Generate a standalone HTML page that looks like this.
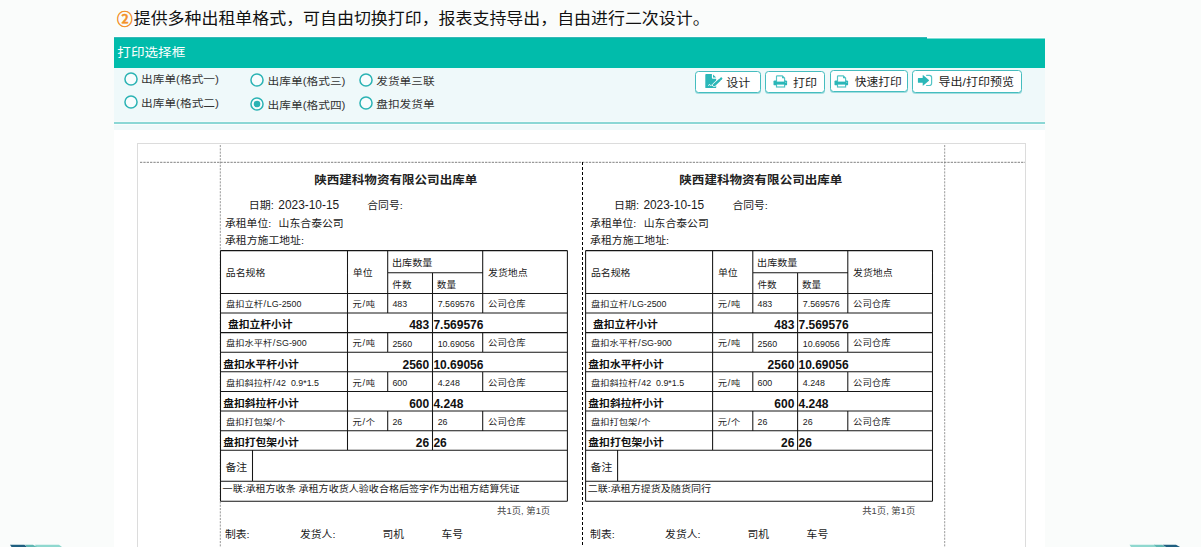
<!DOCTYPE html><html lang="zh-CN"><head><meta charset="utf-8"><title>打印选择框</title><style>
html,body{margin:0;padding:0;}
body{width:1201px;height:547px;overflow:hidden;background:#fafcfb;position:relative;font-family:"Liberation Sans","Noto Sans CJK SC",sans-serif;color:#1a1a1a;}
.t{position:absolute;white-space:nowrap;line-height:20px;}
.abs{position:absolute;}
h1,section,main,article,header,footer,nav{display:block;margin:0;padding:0;font:inherit;}
.t i{font-style:normal;font-size:8.9px;}
.t u{text-decoration:none;padding:0 .7px;}
.q{transform:scaleY(0.92);}
.c2{-webkit-text-stroke:0.55px #f3922b;}
.btn{position:absolute;box-sizing:border-box;background:#fff;border:1.2px solid #45bdbf;border-radius:3.5px;box-shadow:0 1px 0 rgba(69,189,191,.45);}
</style></head><body>
<main>
<div class="abs" style="left:114px;top:130px;width:931px;height:417px;background:#fff;"></div>
<section class="panel">
<svg class="abs" style="left:0;top:30px" width="1201" height="100" viewBox="0 30 1201 100">
<rect x="114" y="36" width="813" height="2" fill="#fff"/><rect x="927" y="37" width="118" height="2" fill="#fff"/>
<rect x="114" y="37.3" width="813" height="30.7" fill="#01bcab"/><rect x="927" y="38.5" width="118" height="29.5" fill="#01bcab"/>
<rect x="114" y="37.5" width="813" height="0.9" fill="#16a8aa"/>
<rect x="114" y="68" width="931" height="62" fill="#eff9fa"/>
<rect x="114" y="121" width="931" height="4" fill="#fff"/>
<rect x="114" y="121.9" width="931" height="2.15" fill="#8bd7d5"/>
</svg>
<h1>
<span class="t c2" style="top:10.07px;font-size:15.6px;left:117.00px;font-weight:500;color:#f3922b;">②</span>
<span class="t q" style="top:9.17px;font-size:16.95px;left:133.70px;color:#111;">提供多种出租单格式，可自由切换打印，报表支持导出，自由进行二次设计。</span>
</h1>
<span class="t q" style="top:43.17px;font-size:13.6px;left:117.30px;color:#fff;">打印选择框</span>
<nav class="formats">
<svg class="abs" style="left:122.55px;top:70.50px" width="16" height="16" viewBox="0 0 16 16"><circle cx="8" cy="8" r="6.05" fill="#f8fcfd" stroke="#2bb3b4" stroke-width="1.5"/></svg>
<span class="t q" style="top:69.28px;font-size:11.7px;left:141.00px;color:#333;">出库单(格式一)</span>
<svg class="abs" style="left:122.55px;top:94.20px" width="16" height="16" viewBox="0 0 16 16"><circle cx="8" cy="8" r="6.05" fill="#f8fcfd" stroke="#2bb3b4" stroke-width="1.5"/></svg>
<span class="t q" style="top:93.28px;font-size:11.7px;left:141.00px;color:#333;">出库单(格式二)</span>
<svg class="abs" style="left:248.90px;top:72.20px" width="16" height="16" viewBox="0 0 16 16"><circle cx="8" cy="8" r="6.05" fill="#f8fcfd" stroke="#2bb3b4" stroke-width="1.5"/></svg>
<span class="t q" style="top:70.88px;font-size:11.7px;left:267.60px;color:#333;">出库单(格式三)</span>
<svg class="abs" style="left:248.90px;top:95.60px" width="16" height="16" viewBox="0 0 16 16"><circle cx="8" cy="8" r="6.05" fill="#f8fcfd" stroke="#2bb3b4" stroke-width="1.5"/><circle cx="8" cy="8" r="3.3" fill="#2bb3b4"/></svg>
<span class="t q" style="top:94.78px;font-size:11.7px;left:267.60px;color:#333;">出库单(格式四)</span>
<svg class="abs" style="left:358.10px;top:72.20px" width="16" height="16" viewBox="0 0 16 16"><circle cx="8" cy="8" r="6.05" fill="#f8fcfd" stroke="#2bb3b4" stroke-width="1.5"/></svg>
<span class="t q" style="top:71.43px;font-size:11.7px;left:376.20px;color:#333;">发货单三联</span>
<svg class="abs" style="left:358.10px;top:95.30px" width="16" height="16" viewBox="0 0 16 16"><circle cx="8" cy="8" r="6.05" fill="#f8fcfd" stroke="#2bb3b4" stroke-width="1.5"/></svg>
<span class="t q" style="top:94.43px;font-size:11.7px;left:376.20px;color:#333;">盘扣发货单</span>
</nav><nav class="toolbar">
<div class="btn" style="left:695.3px;top:70.9px;width:65.6px;height:22.1px;"></div>
<div class="btn" style="left:765.4px;top:70.9px;width:60.0px;height:22.1px;"></div>
<div class="btn" style="left:829.9px;top:70.1px;width:77.9px;height:22.4px;"></div>
<div class="btn" style="left:912.2px;top:70.0px;width:109.8px;height:22.5px;"></div>
<span class="t q" style="top:73.20px;font-size:12px;left:726.30px;color:#222;">设计</span>
<span class="t q" style="top:73.20px;font-size:12px;left:793.10px;color:#222;">打印</span>
<span class="t q" style="top:72.48px;font-size:11.75px;left:854.70px;color:#222;">快速打印</span>
<span class="t q" style="top:72.10px;font-size:12px;left:938.60px;color:#222;">导出/打印预览</span>
<svg class="abs" style="left:705px;top:74px;overflow:visible" width="18" height="15" viewBox="0 0 18 15">
<path d="M0.3 0.9 Q0.3 0.1 1.1 0.1 L6.9 0.1 L6.9 3.7 Q6.9 4.7 7.9 4.7 L11.2 4.7 L11.2 13.4 Q11.2 14.1 10.4 14.1 L1.1 14.1 Q0.3 14.1 0.3 13.4 Z" fill="#2bb7b8"/>
<path d="M8 0.4 L11.2 3.6 L8 3.6 Z" fill="#2bb7b8"/>
<path d="M3.4 11.9 L4.5 10.2 L5.4 11.6 L6.3 11.2 L8.2 11.7" fill="none" stroke="#fff" stroke-width="0.8" stroke-linejoin="round"/>
<path d="M16 4.7 L9.2 11.0" fill="none" stroke="#fff" stroke-width="3.9" stroke-linecap="round"/>
<path d="M14.5 6.1 L9.2 11.0" fill="none" stroke="#2bb7b8" stroke-width="2.6" stroke-linecap="round"/>
<path d="M15.9 4.8 L16.2 4.5" fill="none" stroke="#2bb7b8" stroke-width="2.4" stroke-linecap="round"/>
</svg>
<svg class="abs" style="left:773px;top:75px;overflow:visible" width="15" height="13" viewBox="0 0 15 13">
<path d="M1.7 5.4 L12.9 5.4 Q14.1 5.4 14.1 6.6 L14.1 9.6 Q14.1 10.2 13.5 10.2 L1.1 10.2 Q0.5 10.2 0.5 9.6 L0.5 6.6 Q0.5 5.4 1.7 5.4 Z" fill="#2bb7b8"/>
<path d="M3.5 7.1 L3.5 1.4 Q3.5 0.8 4.1 0.8 L9.3 0.8 L11.6 3.1 L11.6 7.1 Z" fill="#fff" stroke="#2bb7b8" stroke-width="1.15" stroke-opacity=".8"/>
<path d="M9.1 1.0 L11.4 3.3 L9.1 3.3 Z" fill="#2bb7b8"/>
<rect x="3.5" y="9.1" width="8.1" height="2.9" fill="#fff" stroke="#2bb7b8" stroke-width="1.15" stroke-opacity=".85"/>
<circle cx="12.7" cy="7.3" r="0.55" fill="#fff" fill-opacity=".6"/>
</svg>
<svg class="abs" style="left:834.2px;top:74.6px;overflow:visible" width="15" height="13" viewBox="0 0 15 13">
<path d="M1.7 5.4 L12.9 5.4 Q14.1 5.4 14.1 6.6 L14.1 9.6 Q14.1 10.2 13.5 10.2 L1.1 10.2 Q0.5 10.2 0.5 9.6 L0.5 6.6 Q0.5 5.4 1.7 5.4 Z" fill="#2bb7b8"/>
<path d="M3.5 7.1 L3.5 1.4 Q3.5 0.8 4.1 0.8 L9.3 0.8 L11.6 3.1 L11.6 7.1 Z" fill="#fff" stroke="#2bb7b8" stroke-width="1.15" stroke-opacity=".8"/>
<path d="M9.1 1.0 L11.4 3.3 L9.1 3.3 Z" fill="#2bb7b8"/>
<rect x="3.5" y="9.1" width="8.1" height="2.9" fill="#fff" stroke="#2bb7b8" stroke-width="1.15" stroke-opacity=".85"/>
<circle cx="12.7" cy="7.3" r="0.55" fill="#fff" fill-opacity=".6"/>
</svg>
<svg class="abs" style="left:917px;top:74px;overflow:visible" width="16" height="13" viewBox="0 0 16 13">
<path d="M1.4 4.1 L5.7 4.1 L5.7 1.4 Q5.7 0.7 6.3 1.2 L11.9 6 Q12.2 6.4 11.9 6.8 L6.3 11.6 Q5.7 12.1 5.7 11.4 L5.7 8.7 L1.4 8.7 Q0.9 8.7 0.9 8.2 L0.9 4.6 Q0.9 4.1 1.4 4.1 Z" fill="#2bb7b8"/>
<path d="M9.6 1.3 L12.4 1.3 Q14.6 1.3 14.6 3.5 L14.6 9.3 Q14.6 11.5 12.4 11.5 L9.6 11.5" fill="none" stroke="#2bb7b8" stroke-width="1.2" stroke-linecap="round" stroke-opacity=".8"/>
</svg>
</nav></section><section class="preview">
<div class="abs" style="left:137px;top:142.5px;width:889px;height:420px;box-sizing:border-box;border:1px solid #dcdcdc;background:#fff;"></div>
<svg class="abs" style="left:0;top:0" width="1201" height="547" viewBox="0 0 1201 547">
<path d="M220.3 145 V547 M944.7 145 V547" fill="none" stroke="#999" stroke-width="1" stroke-dasharray="2.1 1.2"/>
<path d="M140 162.3 H1025" fill="none" stroke="#808080" stroke-width="1" stroke-dasharray="2.3 1.05"/>
<path d="M582.5 162 V547" fill="none" stroke="#000" stroke-width="1" stroke-dasharray="3 2"/>
</svg>
<article class="doc">
<svg class="abs" style="left:0;top:0" width="1201" height="547" viewBox="0 0 1201 547"><path d="M220.50 250.60 H567.40 M387.70 272.80 H482.70 M220.50 293.40 H567.40 M220.50 313.01 H567.40 M220.50 332.62 H567.40 M220.50 352.23 H567.40 M220.50 371.84 H567.40 M220.50 391.45 H567.40 M220.50 411.06 H567.40 M220.50 430.67 H567.40 M220.50 450.28 H567.40 M220.50 481.20 H567.40 M220.50 501.30 H567.40 M220.50 250.60 V501.30 M567.40 250.60 V501.30 M347.50 250.60 V450.28 M387.70 250.60 V293.40 M482.70 250.60 V293.40 M432.50 272.80 V293.40 M387.70 293.40 V313.01 M432.50 293.40 V332.62 M482.70 293.40 V313.01 M387.70 332.62 V352.23 M432.50 332.62 V371.84 M482.70 332.62 V352.23 M387.70 371.84 V391.45 M432.50 371.84 V411.06 M482.70 371.84 V391.45 M387.70 411.06 V430.67 M432.50 411.06 V450.28 M482.70 411.06 V430.67 M252.50 450.28 V481.20" fill="none" stroke="#161616" stroke-width="1.05"/></svg>
<span class="t q" style="top:170.24px;font-size:12.55px;left:314.20px;font-weight:bold;color:#222;">陕西建科物资有限公司出库单</span>
<span class="t q" style="top:195.02px;font-size:11px;left:248.80px;">日期:</span>
<span class="t " style="top:195.29px;font-size:11.9px;left:278.30px;">2023-10-15</span>
<span class="t q" style="top:195.01px;font-size:10.8px;left:367.30px;">合同号:</span>
<span class="t q" style="top:212.51px;font-size:10.8px;left:225.00px;">承租单位:</span>
<span class="t q" style="top:212.51px;font-size:10.85px;left:278.60px;">山东合泰公司</span>
<span class="t q" style="top:230.21px;font-size:10.85px;left:225.00px;">承租方施工地址:</span>
<span class="t q" style="top:262.54px;font-size:9.9px;left:225.80px;">品名规格</span>
<span class="t q" style="top:262.54px;font-size:9.9px;left:352.80px;">单位</span>
<span class="t q" style="top:252.56px;font-size:10.1px;left:392.00px;">出库数量</span>
<span class="t q" style="top:275.02px;font-size:9.6px;left:392.30px;">件数</span>
<span class="t q" style="top:275.02px;font-size:9.6px;left:436.80px;">数量</span>
<span class="t q" style="top:263.44px;font-size:9.9px;left:488.00px;">发货地点</span>
<span class="t q" style="top:294.20px;font-size:9.25px;left:225.90px;">盘扣立杆<u>/</u><i>LG-2500</i></span>
<span class="t q" style="top:294.20px;font-size:9.25px;left:352.60px;">元<u>/</u>吨</span>
<span class="t " style="top:294.37px;font-size:8.85px;left:392.40px;">483</span>
<span class="t " style="top:294.37px;font-size:8.85px;left:437.70px;">7.569576</span>
<span class="t q" style="top:294.21px;font-size:9.4px;left:488.00px;">公司仓库</span>
<span class="t q" style="top:314.32px;font-size:10.8px;left:227.90px;font-weight:bold;color:#111;">盘扣立杆小计</span>
<span class="t " style="top:315.31px;font-size:12px;right:771.80px;font-weight:bold;color:#111;">483</span>
<span class="t " style="top:315.31px;font-size:12px;left:433.40px;font-weight:bold;color:#111;">7.569576</span>
<span class="t q" style="top:333.42px;font-size:9.25px;left:225.90px;">盘扣水平杆<u>/</u><i>SG-900</i></span>
<span class="t q" style="top:333.42px;font-size:9.25px;left:352.60px;">元<u>/</u>吨</span>
<span class="t " style="top:333.59px;font-size:8.85px;left:392.40px;">2560</span>
<span class="t " style="top:333.59px;font-size:8.85px;left:437.70px;">10.69056</span>
<span class="t q" style="top:333.43px;font-size:9.4px;left:488.00px;">公司仓库</span>
<span class="t q" style="top:353.54px;font-size:10.8px;left:223.20px;font-weight:bold;color:#111;">盘扣水平杆小计</span>
<span class="t " style="top:354.53px;font-size:12px;right:771.80px;font-weight:bold;color:#111;">2560</span>
<span class="t " style="top:354.53px;font-size:12px;left:433.40px;font-weight:bold;color:#111;">10.69056</span>
<span class="t q" style="top:372.64px;font-size:9.25px;left:225.90px;">盘扣斜拉杆<u>/</u><i>42&nbsp; 0.9*1.5</i></span>
<span class="t q" style="top:372.64px;font-size:9.25px;left:352.60px;">元<u>/</u>吨</span>
<span class="t " style="top:372.81px;font-size:8.85px;left:392.40px;">600</span>
<span class="t " style="top:372.81px;font-size:8.85px;left:437.70px;">4.248</span>
<span class="t q" style="top:372.65px;font-size:9.4px;left:488.00px;">公司仓库</span>
<span class="t q" style="top:392.76px;font-size:10.8px;left:223.20px;font-weight:bold;color:#111;">盘扣斜拉杆小计</span>
<span class="t " style="top:393.75px;font-size:12px;right:771.80px;font-weight:bold;color:#111;">600</span>
<span class="t " style="top:393.75px;font-size:12px;left:433.40px;font-weight:bold;color:#111;">4.248</span>
<span class="t q" style="top:411.86px;font-size:9.25px;left:225.90px;">盘扣打包架<u>/</u>个</span>
<span class="t q" style="top:411.86px;font-size:9.25px;left:352.60px;">元<u>/</u>个</span>
<span class="t " style="top:412.03px;font-size:8.85px;left:392.40px;">26</span>
<span class="t " style="top:412.03px;font-size:8.85px;left:437.70px;">26</span>
<span class="t q" style="top:411.87px;font-size:9.4px;left:488.00px;">公司仓库</span>
<span class="t q" style="top:431.98px;font-size:10.8px;left:223.20px;font-weight:bold;color:#111;">盘扣打包架小计</span>
<span class="t " style="top:432.97px;font-size:12px;right:771.80px;font-weight:bold;color:#111;">26</span>
<span class="t " style="top:432.97px;font-size:12px;left:433.40px;font-weight:bold;color:#111;">26</span>
<span class="t q" style="top:456.52px;font-size:10.9px;left:225.40px;">备注</span>
<span class="t q" style="top:479.35px;font-size:10.05px;left:222.60px;">一联:承租方收条 承租方收货人验收合格后签字作为出租方结算凭证</span>
<span class="t q" style="top:501.20px;font-size:9.4px;left:497.10px;color:#444;">共1页, 第1页</span>
<span class="t q" style="top:523.91px;font-size:10.8px;left:225.00px;">制表:</span>
<span class="t q" style="top:523.91px;font-size:10.8px;left:300.00px;">发货人:</span>
<span class="t q" style="top:523.61px;font-size:10.8px;left:382.40px;">司机</span>
<span class="t q" style="top:523.61px;font-size:10.8px;left:441.50px;">车号</span>
</article>
<article class="doc">
<svg class="abs" style="left:0;top:0" width="1201" height="547" viewBox="0 0 1201 547"><path d="M585.60 250.60 H932.50 M752.80 272.80 H847.80 M585.60 293.40 H932.50 M585.60 313.01 H932.50 M585.60 332.62 H932.50 M585.60 352.23 H932.50 M585.60 371.84 H932.50 M585.60 391.45 H932.50 M585.60 411.06 H932.50 M585.60 430.67 H932.50 M585.60 450.28 H932.50 M585.60 481.20 H932.50 M585.60 501.30 H932.50 M585.60 250.60 V501.30 M932.50 250.60 V501.30 M712.60 250.60 V450.28 M752.80 250.60 V293.40 M847.80 250.60 V293.40 M797.60 272.80 V293.40 M752.80 293.40 V313.01 M797.60 293.40 V332.62 M847.80 293.40 V313.01 M752.80 332.62 V352.23 M797.60 332.62 V371.84 M847.80 332.62 V352.23 M752.80 371.84 V391.45 M797.60 371.84 V411.06 M847.80 371.84 V391.45 M752.80 411.06 V430.67 M797.60 411.06 V450.28 M847.80 411.06 V430.67 M617.60 450.28 V481.20" fill="none" stroke="#161616" stroke-width="1.05"/></svg>
<span class="t q" style="top:170.24px;font-size:12.55px;left:679.30px;font-weight:bold;color:#222;">陕西建科物资有限公司出库单</span>
<span class="t q" style="top:195.02px;font-size:11px;left:613.90px;">日期:</span>
<span class="t " style="top:195.29px;font-size:11.9px;left:643.40px;">2023-10-15</span>
<span class="t q" style="top:195.01px;font-size:10.8px;left:732.40px;">合同号:</span>
<span class="t q" style="top:212.51px;font-size:10.8px;left:590.10px;">承租单位:</span>
<span class="t q" style="top:212.51px;font-size:10.85px;left:643.70px;">山东合泰公司</span>
<span class="t q" style="top:230.21px;font-size:10.85px;left:590.10px;">承租方施工地址:</span>
<span class="t q" style="top:262.54px;font-size:9.9px;left:590.90px;">品名规格</span>
<span class="t q" style="top:262.54px;font-size:9.9px;left:717.90px;">单位</span>
<span class="t q" style="top:252.56px;font-size:10.1px;left:757.10px;">出库数量</span>
<span class="t q" style="top:275.02px;font-size:9.6px;left:757.40px;">件数</span>
<span class="t q" style="top:275.02px;font-size:9.6px;left:801.90px;">数量</span>
<span class="t q" style="top:263.44px;font-size:9.9px;left:853.10px;">发货地点</span>
<span class="t q" style="top:294.20px;font-size:9.25px;left:591.00px;">盘扣立杆<u>/</u><i>LG-2500</i></span>
<span class="t q" style="top:294.20px;font-size:9.25px;left:717.70px;">元<u>/</u>吨</span>
<span class="t " style="top:294.37px;font-size:8.85px;left:757.50px;">483</span>
<span class="t " style="top:294.37px;font-size:8.85px;left:802.80px;">7.569576</span>
<span class="t q" style="top:294.21px;font-size:9.4px;left:853.10px;">公司仓库</span>
<span class="t q" style="top:314.32px;font-size:10.8px;left:593.00px;font-weight:bold;color:#111;">盘扣立杆小计</span>
<span class="t " style="top:315.31px;font-size:12px;right:406.70px;font-weight:bold;color:#111;">483</span>
<span class="t " style="top:315.31px;font-size:12px;left:798.50px;font-weight:bold;color:#111;">7.569576</span>
<span class="t q" style="top:333.42px;font-size:9.25px;left:591.00px;">盘扣水平杆<u>/</u><i>SG-900</i></span>
<span class="t q" style="top:333.42px;font-size:9.25px;left:717.70px;">元<u>/</u>吨</span>
<span class="t " style="top:333.59px;font-size:8.85px;left:757.50px;">2560</span>
<span class="t " style="top:333.59px;font-size:8.85px;left:802.80px;">10.69056</span>
<span class="t q" style="top:333.43px;font-size:9.4px;left:853.10px;">公司仓库</span>
<span class="t q" style="top:353.54px;font-size:10.8px;left:588.30px;font-weight:bold;color:#111;">盘扣水平杆小计</span>
<span class="t " style="top:354.53px;font-size:12px;right:406.70px;font-weight:bold;color:#111;">2560</span>
<span class="t " style="top:354.53px;font-size:12px;left:798.50px;font-weight:bold;color:#111;">10.69056</span>
<span class="t q" style="top:372.64px;font-size:9.25px;left:591.00px;">盘扣斜拉杆<u>/</u><i>42&nbsp; 0.9*1.5</i></span>
<span class="t q" style="top:372.64px;font-size:9.25px;left:717.70px;">元<u>/</u>吨</span>
<span class="t " style="top:372.81px;font-size:8.85px;left:757.50px;">600</span>
<span class="t " style="top:372.81px;font-size:8.85px;left:802.80px;">4.248</span>
<span class="t q" style="top:372.65px;font-size:9.4px;left:853.10px;">公司仓库</span>
<span class="t q" style="top:392.76px;font-size:10.8px;left:588.30px;font-weight:bold;color:#111;">盘扣斜拉杆小计</span>
<span class="t " style="top:393.75px;font-size:12px;right:406.70px;font-weight:bold;color:#111;">600</span>
<span class="t " style="top:393.75px;font-size:12px;left:798.50px;font-weight:bold;color:#111;">4.248</span>
<span class="t q" style="top:411.86px;font-size:9.25px;left:591.00px;">盘扣打包架<u>/</u>个</span>
<span class="t q" style="top:411.86px;font-size:9.25px;left:717.70px;">元<u>/</u>个</span>
<span class="t " style="top:412.03px;font-size:8.85px;left:757.50px;">26</span>
<span class="t " style="top:412.03px;font-size:8.85px;left:802.80px;">26</span>
<span class="t q" style="top:411.87px;font-size:9.4px;left:853.10px;">公司仓库</span>
<span class="t q" style="top:431.98px;font-size:10.8px;left:588.30px;font-weight:bold;color:#111;">盘扣打包架小计</span>
<span class="t " style="top:432.97px;font-size:12px;right:406.70px;font-weight:bold;color:#111;">26</span>
<span class="t " style="top:432.97px;font-size:12px;left:798.50px;font-weight:bold;color:#111;">26</span>
<span class="t q" style="top:456.52px;font-size:10.9px;left:590.50px;">备注</span>
<span class="t q" style="top:479.35px;font-size:10.05px;left:587.70px;">二联:承租方提货及随货同行</span>
<span class="t q" style="top:501.20px;font-size:9.4px;left:862.20px;color:#444;">共1页, 第1页</span>
<span class="t q" style="top:523.91px;font-size:10.8px;left:590.10px;">制表:</span>
<span class="t q" style="top:523.91px;font-size:10.8px;left:665.10px;">发货人:</span>
<span class="t q" style="top:523.61px;font-size:10.8px;left:747.50px;">司机</span>
<span class="t q" style="top:523.61px;font-size:10.8px;left:806.60px;">车号</span>
</article>
</section>
<svg class="abs" style="left:0;top:544px" width="1201" height="3" viewBox="0 0 1201 3">
<path d="M35 0.8 H59 L62 3 H36 Z" fill="#8fd8cf"/><path d="M25 0.8 H33 L37 3 H27 Z" fill="#5fb7b3"/><path d="M10 0.8 H24.5 L27 3 H11.5 Z" fill="#1f5f80"/>
<path d="M1129.5 0.8 H1155 L1156 3 H1131 Z" fill="#8fd8cf"/><path d="M1154 0.8 H1162 L1166 3 H1156 Z" fill="#5fb7b3"/><path d="M1162.5 0.8 H1176 L1180 3 H1166 Z" fill="#1f5f80"/>
</svg>
</main></body></html>
